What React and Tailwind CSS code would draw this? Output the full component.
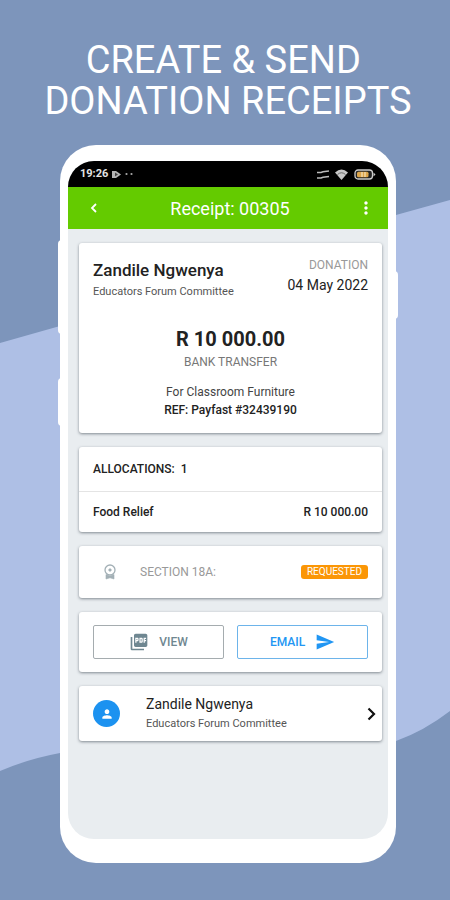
import React from "react";
import { MdMoreVert, MdPerson, MdPictureAsPdf, MdSend } from "react-icons/md";

const receipt = {
  number: "00305",
  donor: "Zandile Ngwenya",
  group: "Educators Forum Committee",
  type: "DONATION",
  date: "04 May 2022",
  amount: "R 10 000.00",
  method: "BANK TRANSFER",
  note: "For Classroom Furniture",
  reference: "REF: Payfast #32439190",
  allocations: [{ name: "Food Relief", amount: "R 10 000.00" }],
};

const Card = ({ className = "", children }) => (
  <section
    className={`rounded-[3px] bg-white shadow-[0_1px_3px_rgba(60,70,80,0.6)] ${className}`}
  >
    {children}
  </section>
);

const Backdrop = () => (
  <svg
    className="absolute inset-0 h-full w-full"
    viewBox="0 0 450 900"
    preserveAspectRatio="none"
    aria-hidden="true"
  >
    <path
      d="M0 343 L60 326 C170 290 280 246 396 215 L450 200 V711 Q424 731 396 741 C300 772 180 728 60 753 Q28 759 0 771 Z"
      fill="#aebfe5"
    />
  </svg>
);

const StatusBar = () => (
  <div className="flex h-[26px] items-center justify-between bg-black px-3 text-[#e4e4e4]">
    <div className="flex items-center gap-1">
      <span className="text-[11px] font-bold">19:26</span>
      <svg width="9" height="9" viewBox="0 0 9 9" aria-hidden="true">
        <path d="M0 1h4l5 3.5L4 8H0z" fill="#b5b5b5" />
        <path d="M3 2.500l3 2-3 2z" fill="#444" />
      </svg>
      <svg width="8" height="4" viewBox="0 0 8 4" aria-hidden="true">
        <circle cx="1.500" cy="2" r="1.100" fill="#aaa" />
        <circle cx="6.500" cy="2" r="1.100" fill="#aaa" />
      </svg>
    </div>
    <div className="flex items-center gap-[6px]">
      <svg width="12" height="10" viewBox="0 0 12 10" aria-hidden="true">
        <path
          d="M0 3.500h4l2-.8 6-.7M0 9h4l2-.8 6-.7"
          fill="none"
          stroke="#bbb"
          strokeWidth="1.600"
        />
      </svg>
      <svg width="13" height="11" viewBox="0 0 13 11" aria-hidden="true">
        <path d="M0 3.500Q6.500-2.500 13 3.500L6.500 11z" fill="#c8c8c8" />
        <path
          d="M2.500 5.500Q6.500 2 10.500 5.500"
          fill="none"
          stroke="#555"
          strokeWidth="0.800"
        />
      </svg>
      <svg width="22" height="11" viewBox="0 0 22 11" aria-hidden="true">
        <rect x="1" y="1" width="17.500" height="9" rx="3" fill="#222" stroke="#ccc" strokeWidth="1.300" />
        <rect x="3" y="2.800" width="11.500" height="5.400" rx="1.500" fill="#dda54a" />
        <path d="M8 3v5M11 3v5" stroke="#f5e3c0" strokeWidth="1.200" />
        <path d="M19.500 3.500L21.500 5.500L19.500 7.500z" fill="#ccc" />
      </svg>
    </div>
  </div>
);

const AwardIcon = () => (
  <svg width="14" height="16" viewBox="0 0 14 16" fill="none" stroke="#a3b0b6" aria-hidden="true">
    <circle cx="7" cy="6" r="5" strokeWidth="1.300" />
    <circle cx="7" cy="6" r="1.300" fill="#a3b0b6" strokeWidth="0.600" />
    <path d="M3 10.500v4.500l4-1.200 4 1.200v-4.500L7 12z" fill="#a3b0b6" strokeWidth="0.600" />
  </svg>
);

const App = () => {
  return (
    <main className="relative min-h-screen overflow-hidden bg-[#7d95bb] font-['Roboto',sans-serif] text-[#222]">
      <Backdrop />

      <div className="relative flex min-h-screen flex-col pt-10 pr-[54px] pb-[37px] pl-[60px]">
        <h1 className="-mx-10 text-center text-[38px] leading-[41px] whitespace-nowrap text-white">
          CREATE &amp; SEND&nbsp;
          <br />
          DONATION RECEIPTS
        </h1>

        {/* phone frame */}
        <div className="relative mt-[23px] flex grow flex-col rounded-[36px] bg-white px-2 pt-4 pb-6">
          <span className="absolute top-[95px] -left-[2px] h-[94px] w-1 rounded-l-sm bg-white" />
          <span className="absolute top-[233px] -left-[2px] h-12 w-1 rounded-l-sm bg-white" />
          <span className="absolute top-[126px] -right-[2px] h-12 w-1 rounded-r-sm bg-white" />

          <div className="flex grow flex-col overflow-hidden rounded-[26px] bg-[#e9edf0]">
            <StatusBar />

            <header className="flex h-[42px] items-center justify-between bg-[#64cb00] pr-3 pl-4 text-white">
              <button type="button" aria-label="Back" className="flex w-5 justify-center">
                <svg width="8" height="10" viewBox="0 0 8 10" fill="none" aria-hidden="true">
                  <path d="M6 1L2 5l4 4" stroke="white" strokeWidth="1.800" />
                </svg>
              </button>
              <h2 className="text-[18px]">Receipt: {receipt.number}</h2>
              <button type="button" aria-label="More options" className="flex w-5 justify-center">
                <MdMoreVert size={20} />
              </button>
            </header>

            <div className="flex flex-col gap-[14px] pt-[14px] pr-[6px] pl-[11px]">
              <Card className="px-[14px] pt-4 pb-[14px]">
                <div className="flex justify-between">
                  <div>
                    <h3 className="text-[17px] leading-[22px] font-medium">{receipt.donor}</h3>
                    <p className="text-[11px] leading-[22px] text-[#555]">{receipt.group}</p>
                  </div>
                  <div className="text-right">
                    <p className="text-[12px] leading-3 text-[#999]">{receipt.type}</p>
                    <p className="text-[14px] leading-[28px]">{receipt.date}</p>
                  </div>
                </div>
                <div className="mt-6 text-center">
                  <p className="text-[20px] leading-6 font-bold">{receipt.amount}</p>
                  <p className="text-[12px] leading-[22px] text-[#777]">{receipt.method}</p>
                  <p className="mt-[10px] text-[12px] leading-[18px] text-[#444]">{receipt.note}</p>
                  <p className="text-[12px] leading-[18px] font-medium">{receipt.reference}</p>
                </div>
              </Card>

              <Card>
                <h3 className="border-b border-[#e4e4e4] px-[14px] text-[12px] leading-[44px] font-medium">
                  ALLOCATIONS: &nbsp;{receipt.allocations.length}
                </h3>
                {receipt.allocations.map((item) => (
                  <div
                    key={item.name}
                    className="flex justify-between px-[14px] text-[12px] leading-[40px] font-medium"
                  >
                    <span>{item.name}</span>
                    <span>{item.amount}</span>
                  </div>
                ))}
              </Card>

              <Card className="flex h-[52px] items-center px-[14px]">
                <span className="flex w-[33px] justify-center">
                  <AwardIcon />
                </span>
                <span className="ml-[14px] text-[12px] text-[#999]">SECTION 18A:</span>
                <span className="ml-auto rounded-[3px] bg-[#fb9606] px-[6px] text-[10px] leading-[14px] text-white">
                  REQUESTED
                </span>
              </Card>

              <Card className="grid grid-cols-2 gap-[13px] px-[14px] py-[13px]">
                <button
                  type="button"
                  className="flex h-[34px] items-center justify-center gap-[10px] rounded-[2px] border border-[#a5acaf] text-[12px] font-medium text-[#6f8791]"
                >
                  <MdPictureAsPdf size={20} />
                  VIEW
                </button>
                <button
                  type="button"
                  className="flex h-[34px] items-center justify-center gap-[10px] rounded-[2px] border border-[#6db4ea] text-[12px] font-medium text-[#2196f3]"
                >
                  EMAIL
                  <MdSend size={20} />
                </button>
              </Card>

              <Card>
                <button type="button" className="flex h-[55px] w-full items-center pr-1 pl-[14px] text-left">
                  <span className="flex h-[27px] w-[27px] items-center justify-center rounded-full bg-[#1c92f0] text-white">
                    <MdPerson size={14} />
                  </span>
                  <span className="ml-[26px] flex flex-col">
                    <span className="text-[14px] leading-5">{receipt.donor}</span>
                    <span className="text-[11px] leading-5 text-[#555]">{receipt.group}</span>
                  </span>
                  <svg width="12" height="14" viewBox="0 0 12 14" fill="none" className="ml-auto" aria-hidden="true">
                    <path d="M2.500 1.500L8 7l-5.500 5.500" stroke="#111" strokeWidth="2.200" />
                  </svg>
                </button>
              </Card>
            </div>
          </div>
        </div>
      </div>
    </main>
  );
};

export default App;
